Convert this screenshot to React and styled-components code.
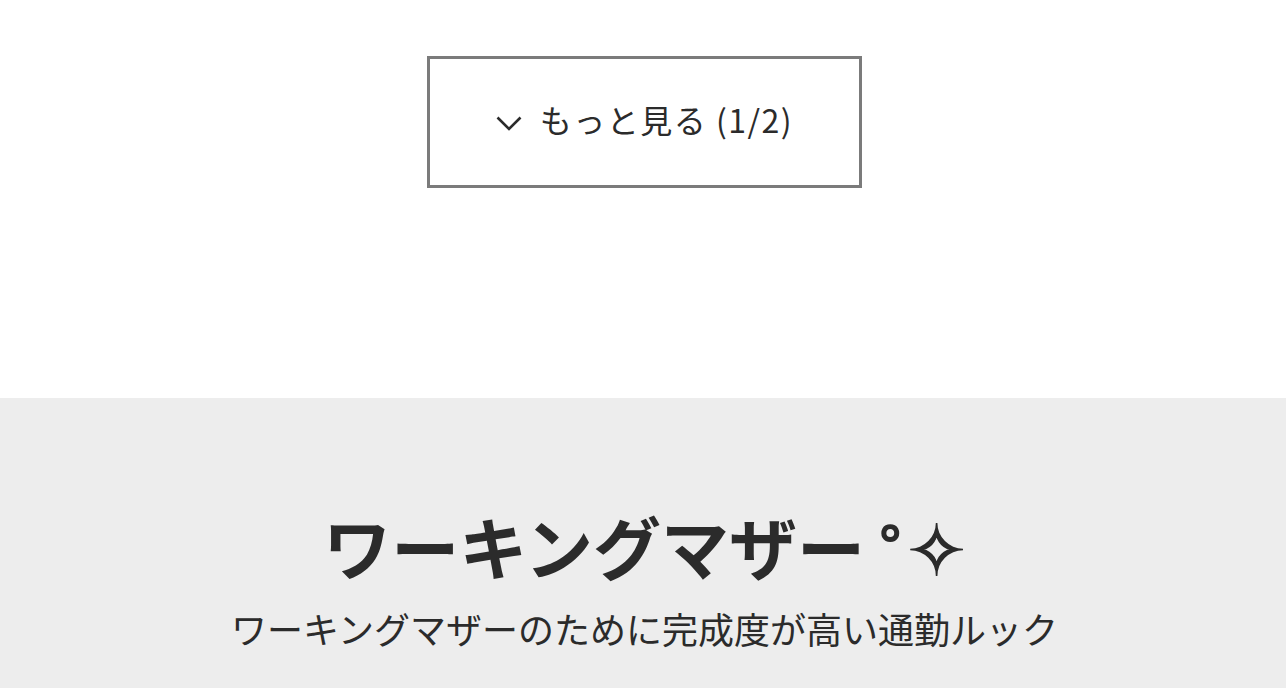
import React from "react";
import styled, { createGlobalStyle } from "styled-components";

const GlobalStyle = createGlobalStyle`
  body {
    margin: 0;
    background: #fff;
    font-family: "Noto Sans CJK JP", "Noto Sans", sans-serif;
    color: #2b2b2b;
  }
`;

const Top = styled.section`
  height: 398px;
  display: flex;
  justify-content: center;
  align-items: flex-start;
  padding: 56px 0 0 3px;
  box-sizing: border-box;
`;

const MoreButton = styled.button`
  width: 435px;
  height: 132px;
  border: 3px solid #7b7b7b;
  background: #fff;
  display: flex;
  align-items: center;
  justify-content: center;
  gap: 18px;
  font-family: inherit;
  font-size: 32px;
  letter-spacing: 1.5px;
  color: #2b2b2b;
  cursor: pointer;
  padding: 0 0 6px;
`;

const Chevron = styled.svg`
  width: 26px;
  height: 15px;
  margin-top: 8px;
  flex-shrink: 0;
`;

const Feature = styled.section`
  background: #ededed;
  padding: 100px 0 0 3px;
  box-sizing: border-box;
  display: flex;
  flex-direction: column;
  align-items: center;
  min-height: 290px;
`;

const Title = styled.h2`
  margin: 0;
  font-size: 68px;
  font-weight: 700;
  line-height: 1.4;
  color: #2b2b2b;
  white-space: nowrap;
`;

const Ring = styled.span`
  font-family: "Noto Sans", sans-serif;
  font-weight: 700;
  font-size: 52px;
  margin-left: 14px;
  vertical-align: 13px;
`;

const Star = styled.span`
  font-family: "DejaVu Sans", sans-serif;
  font-weight: 700;
  font-size: 70px;
  line-height: 1;
  margin-left: 6px;
  -webkit-text-stroke: 1.6px #2b2b2b;
`;

const Subtitle = styled.p`
  margin: 10px 0 0;
  font-size: 36px;
  line-height: 1.4;
  color: #2b2b2b;
`;

export default function App() {
  return (
    <>
      <GlobalStyle />
      <Top>
        <MoreButton>
          <Chevron viewBox="0 0 26 15" fill="none">
            <path d="M1.5 1.5L13 13 24.5 1.5" stroke="#2b2b2b" strokeWidth="2.6" />
          </Chevron>
          もっと見る (1/2)
        </MoreButton>
      </Top>
      <Feature>
        <Title>
          ワーキングマザー<Ring>°</Ring>
          <Star>✧</Star>
        </Title>
        <Subtitle>ワーキングマザーのために完成度が高い通勤ルック</Subtitle>
      </Feature>
    </>
  );
}
